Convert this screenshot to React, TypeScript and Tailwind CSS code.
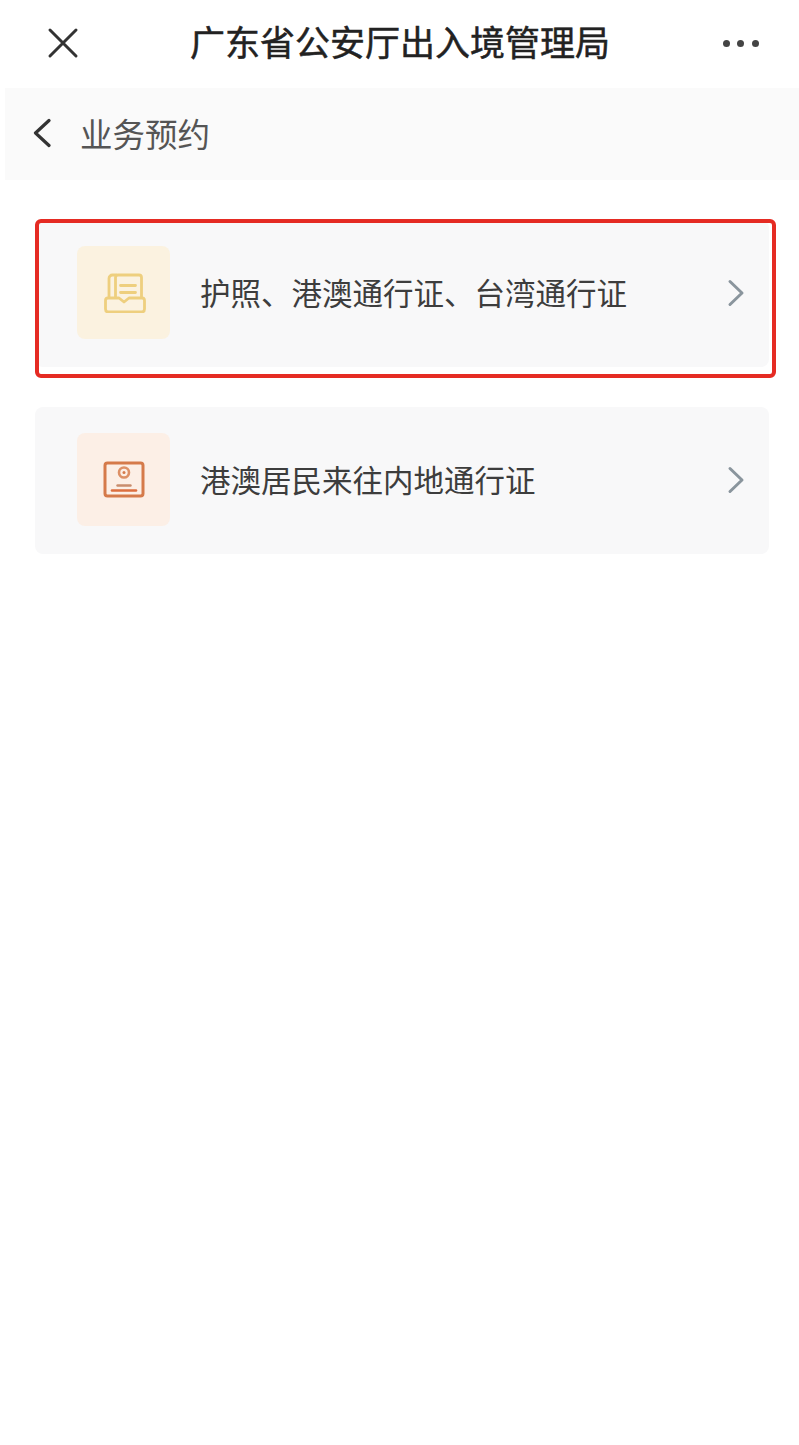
const fontStack = { fontFamily: '"Noto Sans CJK SC", "Liberation Sans", sans-serif' };

const PassportIcon = () => (
  <svg width="44" height="40" viewBox="0 0 44 40" fill="none" stroke="#eecf7e" strokeWidth="2.8" strokeLinejoin="round" strokeLinecap="round">
    <path d="M7 24V5.5C7 3.5 8.5 2 10.5 2H14" />
    <path d="M13.5 24V4.5C13.5 3 14.5 2 16 2H37C38.5 2 39.5 3 39.5 4.5V24" />
    <path d="M18.5 12.5H33.5M18.5 19.5H33.5" />
    <path d="M3.5 27.5C3.5 26 4.5 25 6 25H17L22 29L27 25H40C41.5 25 42.5 26 42.5 27.5V36C42.5 38 41.5 39 39.5 39H6.5C4.5 39 3.5 38 3.5 36Z" />
  </svg>
);

const PermitIcon = () => (
  <svg width="44" height="40" viewBox="0 0 44 40" fill="none" stroke="#d57a4a" strokeLinecap="round">
    <rect x="3" y="3" width="38" height="33" rx="2.5" strokeWidth="3" />
    <circle cx="22" cy="12.5" r="5" strokeWidth="2.6" stroke="#dd9066" />
    <circle cx="22" cy="12.5" r="1.5" fill="#d57a4a" stroke="none" />
    <path d="M15.5 25.5H28.5" strokeWidth="2.4" stroke="#c98d6d" />
    <path d="M10 30.5H34" strokeWidth="2.6" stroke="#dc6f3f" />
  </svg>
);

const Chevron = () => (
  <svg width="18" height="28" viewBox="0 0 18 28" fill="none" stroke="#8a959d" strokeWidth="3" strokeLinecap="round" strokeLinejoin="round">
    <path d="M3 2.5L15 14L3 25.5" />
  </svg>
);

const items = [
  { label: "护照、港澳通行证、台湾通行证", tint: "bg-[#fbf2e0]", icon: <PassportIcon /> },
  { label: "港澳居民来往内地通行证", tint: "bg-[#fcefe6]", icon: <PermitIcon /> },
];

const App = () => {
  return (
    <div className="relative h-[1445px] w-[799px] overflow-hidden bg-white" style={fontStack}>
      <header className="flex h-[88px] items-center justify-between pb-[2px] pl-[47px] pr-[40px]">
        <svg width="32" height="32" viewBox="0 0 32 32" fill="none" stroke="#333" strokeWidth="3" strokeLinecap="round">
          <path d="M3 3L29 29M29 3L3 29" />
        </svg>
        <h1 className="mr-[2px] mb-[5px] text-[35px] leading-none font-normal text-[#222] [-webkit-text-stroke:0.5px_#222]">广东省公安厅出入境管理局</h1>
        <div className="flex gap-[7.5px]">
          <span className="h-[7px] w-[7px] rounded-full bg-[#444]" />
          <span className="h-[7px] w-[7px] rounded-full bg-[#444]" />
          <span className="h-[7px] w-[7px] rounded-full bg-[#444]" />
        </div>
      </header>

      <div className="ml-[5px] flex h-[92px] items-center gap-[29px] bg-[#fafafa] pb-[2px] pl-[28px]">
        <svg width="18" height="30" viewBox="0 0 18 30" fill="none" stroke="#333" strokeWidth="3.2" strokeLinecap="round" strokeLinejoin="round">
          <path d="M16 2.5L2.5 15L16 27.5" />
        </svg>
        <span className="text-[32.5px] leading-none text-[#555]">业务预约</span>
      </div>

      <div className="mt-[40px] flex flex-col gap-[40px] pl-[35px] pr-[30px]">
        {items.map((item) => (
          <div key={item.label} className="flex h-[147px] items-center rounded-[8px] bg-[#f8f8f9] pb-[2px] pl-[42px] pr-[24px]">
            <div className={`flex h-[93px] w-[93px] items-center justify-center rounded-[8px] ${item.tint}`}>{item.icon}</div>
            <span className="ml-[30px] flex-1 text-[30.5px] leading-none text-[#3d3d3d]">{item.label}</span>
            <Chevron />
          </div>
        ))}
      </div>

      {/* red annotation box over the first row */}
      <div className="absolute top-[219px] left-[35px] h-[159px] w-[741px] rounded-[6px] border-[4px] border-[#e52b23]" />
    </div>
  );
};

export default App;
